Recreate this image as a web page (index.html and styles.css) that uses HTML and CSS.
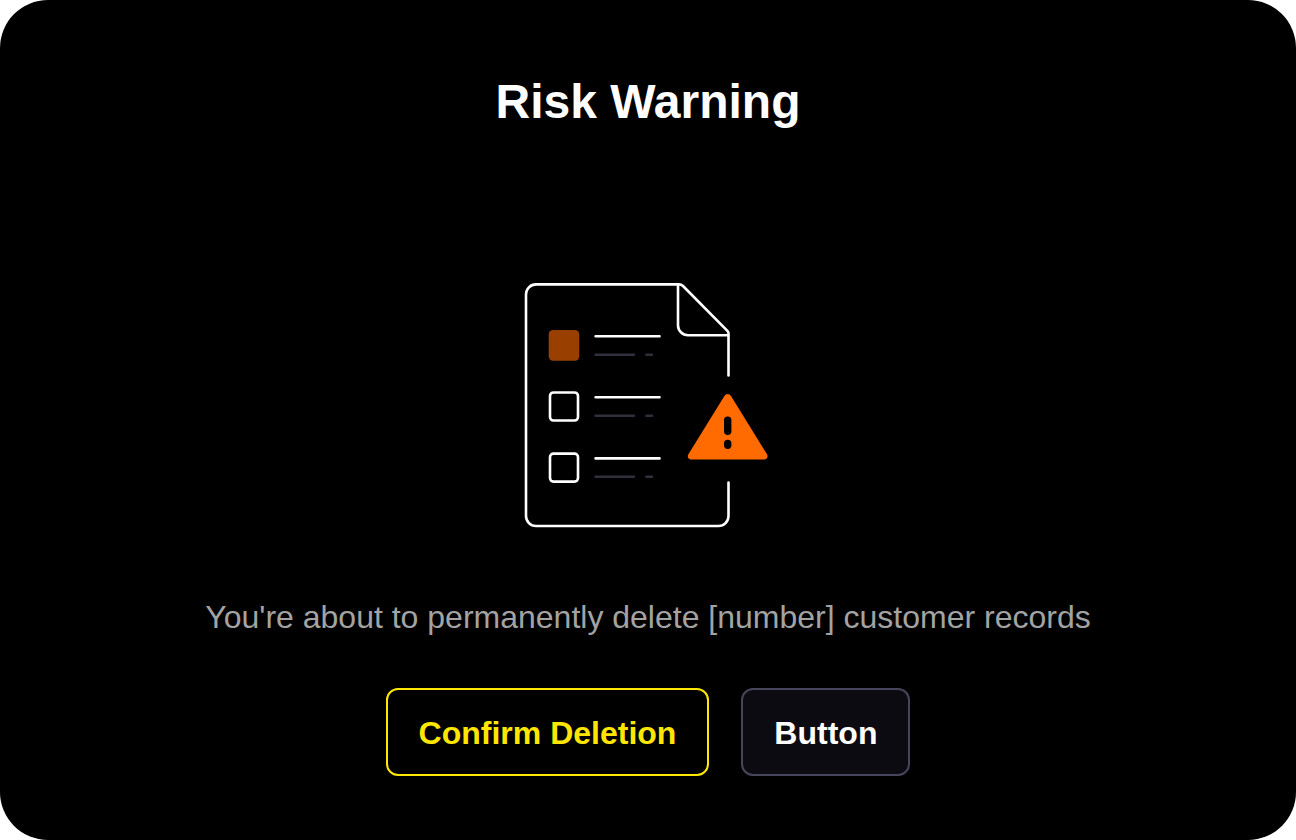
FILE: index.html
```html
<!DOCTYPE html>
<html lang="en">
<head>
<meta charset="utf-8">
<title>Risk Warning</title>
<link rel="stylesheet" href="styles.css">
</head>
<body>
<main class="dialog" role="alertdialog" aria-labelledby="title" aria-describedby="message">
  <h1 class="title" id="title">Risk Warning</h1>
  <svg class="illustration" viewBox="524 282 248 248" fill="none" stroke-width="2.6" stroke-linecap="round" stroke-linejoin="round" aria-hidden="true">
    <g stroke="#fff">
      <path d="M728.5 375.5V333.5Q728.5 332 727.4 330.9L683 286Q681.4 284.4 679 284.4H536A10 10 0 0 0 526 294.400V516A10 10 0 0 0 536 526H718.500A10 10 0 0 0 728.500 516V482.500"/>
      <path d="M678 285V325.200A10 10 0 0 0 688 335.200H728"/>
      <rect x="550" y="392.500" width="28" height="28" rx="3.500"/>
      <rect x="550" y="453.600" width="28" height="28" rx="3.500"/>
      <path d="M595.600 336.200H659.500M595.600 397.300H659.500M595.600 458.400H659.500"/>
    </g>
    <path stroke="#30303c" d="M595.600 354.700H634M646.500 354.700H652M595.600 415.700H634M646.500 415.700H652M595.600 476.800H634M646.500 476.800H652"/>
    <rect x="548.700" y="330" width="30.600" height="30.700" rx="4.500" fill="#994000"/>
    <path fill="#ff6b00" d="M724.400 396.100Q725.600 394.100 727.700 394.100T731 396.100L767 454.300C768.600 457 766.800 459.600 764.200 459.600H691.200C688.600 459.600 686.800 457 688.400 454.300Z"/>
    <rect x="724" y="416.400" width="7.400" height="18.500" rx="3.700" fill="#000"/>
    <rect x="724" y="439.800" width="7.400" height="9.200" rx="3.700" fill="#000"/>
  </svg>
  <p class="message" id="message">You're about to permanently delete [number] customer records</p>
  <div class="actions">
    <button class="button button-danger" type="button">Confirm Deletion</button>
    <button class="button button-neutral" type="button">Button</button>
  </div>
</main>
</body>
</html>
```
FILE: styles.css
```css
* {
  box-sizing: border-box;
}

body {
  margin: 0;
  background: #fff;
  font-family: "Helvetica Neue", Helvetica, "Liberation Sans", Arial, sans-serif;
}

.dialog {
  display: flex;
  flex-direction: column;
  align-items: center;
  min-height: 100vh;
  padding: 72px 64px 64px;
  border-radius: 48px;
  background: #000;
  color: #fff;
}

.title {
  margin: 0;
  font-size: 48px;
  line-height: 60px;
}

.illustration {
  width: 248px;
  height: 248px;
  margin: auto 0 64px;
}

.message {
  margin: 0 0 48px;
  color: #a3a3a3;
  font-size: 32px;
  line-height: 46px;
  text-align: center;
}

.actions {
  display: flex;
  flex-wrap: wrap;
  justify-content: center;
  gap: 32px;
}

.button {
  padding: 21px 31px 19px;
  border: 2px solid;
  border-radius: 12px;
  font: bold 32px/44px "Helvetica Neue", Helvetica, "Liberation Sans", Arial, sans-serif;
}

.button-danger {
  border-color: #ffe600;
  background: #000;
  color: #ffe600;
}

.button-neutral {
  border-color: #46465a;
  background: #0c0b11;
  color: #fff;
}
```
